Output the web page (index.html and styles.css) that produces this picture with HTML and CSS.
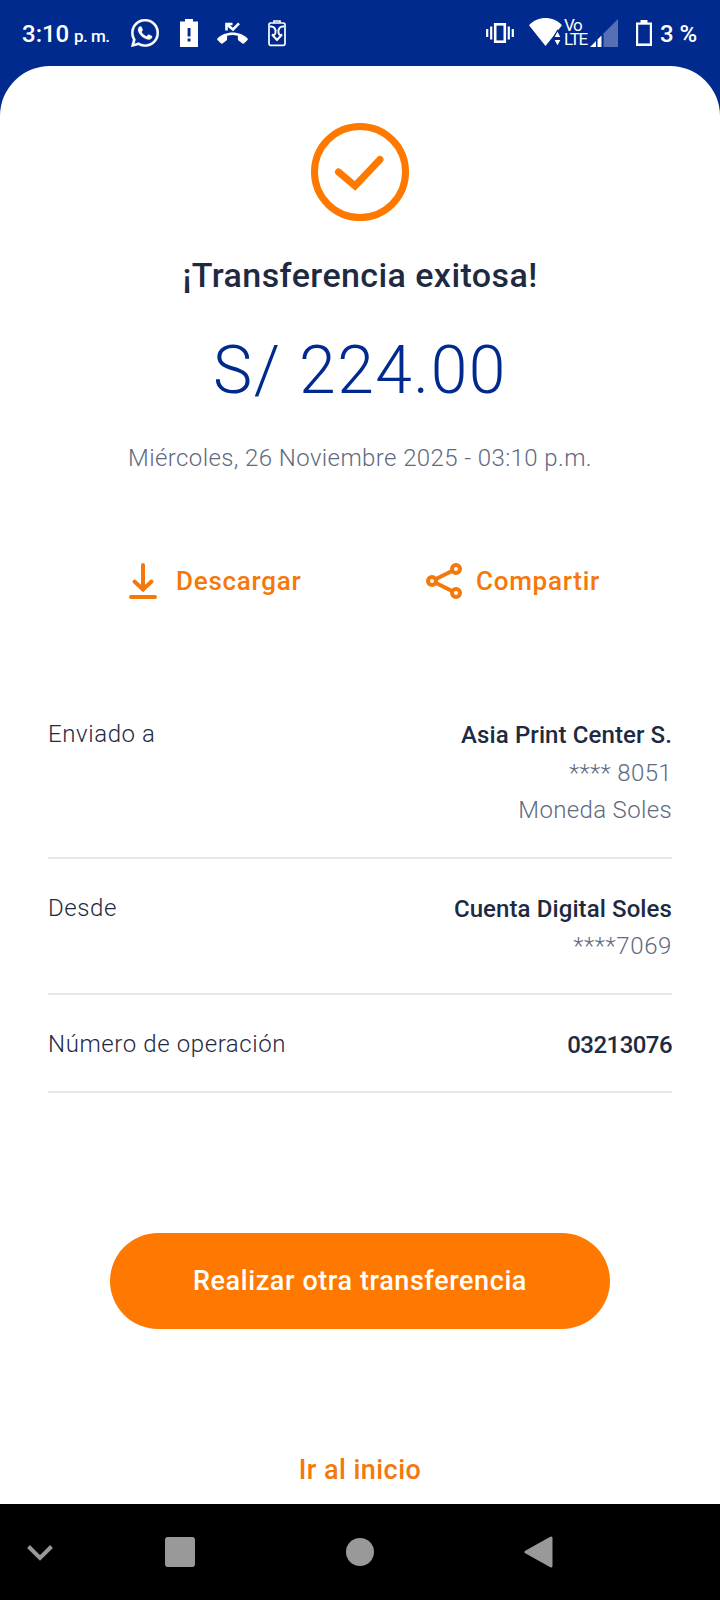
FILE: index.html
```html
<!DOCTYPE html>
<html lang="es">
<head>
<meta charset="utf-8">
<title>Transferencia exitosa</title>
<link rel="stylesheet" href="styles.css">
</head>
<body>
<div class="screen">
  <header class="status">
    <span class="time">3:10</span><span class="ampm">p. m.</span>
    <svg class="i-whatsapp" width="28" height="28" viewBox="2 2 20 20"><path fill="#fff" stroke="#fff" stroke-width=".2" d="M12.04 2C6.58 2 2.13 6.45 2.13 11.91C2.13 13.66 2.59 15.36 3.45 16.86L2.05 22L7.3 20.62C8.75 21.41 10.38 21.83 12.04 21.83C17.5 21.83 21.95 17.38 21.95 11.92C21.95 9.27 20.92 6.78 19.05 4.91C17.18 3.03 14.69 2 12.04 2M12.05 3.67C14.25 3.67 16.31 4.53 17.87 6.09C19.42 7.65 20.28 9.72 20.28 11.92C20.28 16.46 16.58 20.15 12.04 20.15C10.56 20.15 9.11 19.76 7.85 19L7.55 18.83L4.43 19.65L5.26 16.61L5.06 16.29C4.24 15 3.8 13.47 3.8 11.91C3.81 7.37 7.5 3.67 12.05 3.67M8.53 7.33C8.37 7.33 8.1 7.39 7.87 7.64C7.65 7.89 7 8.5 7 9.71C7 10.93 7.89 12.1 8 12.27C8.14 12.44 9.76 14.94 12.25 16C12.84 16.27 13.3 16.42 13.66 16.53C14.25 16.72 14.79 16.69 15.22 16.63C15.7 16.56 16.68 16.03 16.89 15.45C17.1 14.87 17.1 14.38 17.04 14.27C16.97 14.17 16.81 14.11 16.56 14C16.31 13.86 15.09 13.26 14.87 13.18C14.64 13.1 14.5 13.06 14.31 13.3C14.15 13.55 13.67 14.11 13.53 14.27C13.38 14.44 13.24 14.46 13 14.34C12.74 14.21 11.94 13.95 11 13.11C10.26 12.45 9.77 11.64 9.62 11.39C9.5 11.15 9.61 11 9.73 10.89C9.84 10.78 10 10.6 10.1 10.45C10.23 10.31 10.27 10.2 10.35 10.04C10.43 9.87 10.39 9.73 10.33 9.61C10.27 9.5 9.77 8.26 9.56 7.77C9.36 7.29 9.16 7.35 9 7.34H8.53Z"/></svg>
    <svg class="i-alert" width="18" height="28" viewBox="0 0 18 28"><path fill="#fff" fill-rule="evenodd" d="M5 0h8v2.500h5V28H0V2.500h5zM7.600 9h2.900v8.500H7.600zM7.600 19.500h2.900v2.900H7.600z"/></svg>
    <svg class="i-missed" width="31" height="22" viewBox="0 0 31 22"><path d="M9.500 8.500V2h6M10 2.500l6 5L22 1.300" fill="none" stroke="#fff" stroke-width="2.600"/><path fill="#fff" d="M15.500 10.500C9.500 10.500 4 12.800.5 16.400q-.7.800 0 1.600l3.300 3.300q.8.700 1.700.1l4-2.900q.6-.5.600-1.200v-3.600q5.400-1.500 10.800 0v3.600q0 .7.600 1.200l4 2.900q.9.600 1.700-.1l3.300-3.300q.7-.8 0-1.600C27 12.800 21.500 10.500 15.500 10.500z"/></svg>
    <svg class="i-saver" width="18" height="27" viewBox="0 0 18 27" fill="none" stroke="#fff" stroke-width="1.700"><path d="M6 2.800V1h6v1.800"/><rect x="1" y="3" width="16" height="22.300" rx="1.500"/><path stroke-width="1.900" d="M2 6.500C6 6 8 8.500 7.500 12.500Q7 16 4 14.500L9 20l5-5.500Q11 16 10.500 12.500C10 8.500 12 6 16 6.500"/></svg>
    <span class="spacer"></span>
    <svg class="i-vibrate" width="28" height="20" viewBox="0 0 28 20" fill="none" stroke="#fff"><rect x="9.200" y="1.300" width="9.600" height="17.400" stroke-width="2.600"/><path stroke-width="2.200" d="M1.200 6v8M5.200 3.500v13M22.800 3.500v13M26.800 6v8"/></svg>
    <svg class="i-wifi" width="33" height="28" viewBox="0 0 33 28"><path fill="#fff" d="M0 7.200C9-2.400 24-2.400 33 7.200L16.500 28z"/><path fill="#fff" stroke="#002a8d" stroke-width="1.200" d="M28.500 12.500l3.800 7h-7.600zM28.500 28.500l3.800-7h-7.600z"/></svg>
    <span class="volte"><span class="vo">Vo</span><span class="lte">LTE</span></span>
    <svg class="i-signal" width="28" height="28" viewBox="0 0 28 28"><path fill="#5770b5" d="M13.500 14.500L28 0v28H13.500z"/><path fill="#fff" d="M0 28l6-6v6zM7.500 20.500L11.500 16.500V28h-4z"/></svg>
    <svg class="i-batt" width="16" height="26" viewBox="0 0 16 26"><path fill="#fff" d="M4.500 0h7v4h-7z"/><rect x="1.100" y="3.600" width="13.800" height="21.300" fill="none" stroke="#fff" stroke-width="2.200"/><path stroke="#f08080" d="M2 23.500h12"/></svg>
    <span class="pct">3 %</span>
  </header>
  <main class="sheet">
    <svg class="success" width="98" height="98" viewBox="0 0 98 98" fill="none" stroke="#ff7800" stroke-width="7"><circle cx="49" cy="49" r="45.500"/><path stroke-linecap="round" d="M27.500 49L44 63 69 36.500"/></svg>
    <h1 class="title">¡Transferencia exitosa!</h1>
    <div class="amount">S/ 224.00</div>
    <div class="date">Miércoles, 26 Noviembre 2025 - 03:10 p.m.</div>
    <div class="actions">
      <a class="action action-download"><svg width="28" height="36" viewBox="0 0 28 36" fill="none" stroke="#f5780a" stroke-width="4" stroke-linecap="round"><path d="M14 2v24M5.500 18.500L14 26.500 22.500 18.500M2 34h24"/></svg><span class="action-label">Descargar</span></a>
      <a class="action action-share"><svg width="36" height="36" viewBox="0 0 36 36" fill="none" stroke="#f5780a" stroke-width="4"><path d="M10 16L26 8M10 20l16 8"/><circle cx="6" cy="18" r="4"/><circle cx="30" cy="6" r="4"/><circle cx="30" cy="30" r="4"/></svg><span class="action-label">Compartir</span></a>
    </div>
    <section class="details">
      <div class="row"><span class="label">Enviado a</span><div class="value"><strong>Asia Print Center S.</strong><span>**** 8051</span><span>Moneda Soles</span></div></div>
      <div class="row"><span class="label">Desde</span><div class="value"><strong>Cuenta Digital Soles</strong><span class="account">****7069</span></div></div>
      <div class="row"><span class="label">Número de operación</span><div class="value"><strong class="number">03213076</strong></div></div>
    </section>
    <button class="primary">Realizar otra transferencia</button>
    <a class="home">Ir al inicio</a>
  </main>
  <nav class="navbar">
    <svg class="n-down" width="26" height="16" viewBox="0 0 26 16"><path d="M1.500 1.500L13 13 24.500 1.500" fill="none" stroke="#999" stroke-width="4"/></svg>
    <svg class="n-recent" width="30" height="30"><rect width="30" height="30" rx="3" fill="#999"/></svg>
    <svg class="n-home" width="28" height="28"><circle cx="14" cy="14" r="14" fill="#999"/></svg>
    <svg class="n-back" width="29" height="32" viewBox="0 0 29 32"><path d="M2 16L27 2v28z" fill="#999" stroke="#999" stroke-width="3" stroke-linejoin="round"/></svg>
  </nav>
</div>
</body>
</html>
```
FILE: styles.css
```css
* { box-sizing: border-box; }
body { margin: 0; font-family: Roboto, "Liberation Sans", sans-serif; }
.screen { width: 720px; height: 1600px; display: flex; flex-direction: column; background: #002a8d; overflow: hidden; }
.screen svg { flex: none; display: block; }
.status { height: 66px; flex: none; display: flex; align-items: flex-start; padding: 0 22px; color: #fff; font-weight: 500; white-space: nowrap; }
.time { font-size: 24px; line-height: 28px; margin-top: 20px; width: 52px; }
.ampm { font-size: 17px; line-height: 22px; margin-top: 25px; width: 57px; letter-spacing: -0.5px; }
.i-whatsapp { margin-top: 19px; }
.i-alert { margin: 19px 0 0 21px; }
.i-missed { margin: 22px 0 0 19px; }
.i-saver { margin: 20px 0 0 20px; }
.spacer { flex: 1; }
.i-vibrate { margin-top: 23px; }
.i-wifi { margin: 18px 0 0 15px; }
.volte { display: flex; flex-direction: column; width: 26px; margin: 18px 0 0 2px; font-size: 17px; line-height: 14px; font-weight: 400; }
.vo { letter-spacing: -1.5px; }
.lte { letter-spacing: -1.2px; }
.i-signal { margin-top: 19px; }
.i-batt { margin: 20px 0 0 18px; }
.pct { font-size: 24px; line-height: 28px; margin: 20px 0 0 8px; width: 38px; }
.sheet { flex: 1; background: #fff; border-radius: 50px 50px 0 0; display: flex; flex-direction: column; align-items: center; white-space: nowrap; }
.success { margin-top: 57px; }
.title { margin: 34px 0 0; height: 40px; line-height: 40px; font-size: 34px; font-weight: 500; letter-spacing: 0.42px; color: #1e2a42; }
.amount { margin-top: 38px; height: 76px; line-height: 76px; font-size: 66px; font-weight: 300; letter-spacing: 1.5px; color: #002a8d; }
.date { margin-top: 34px; height: 30px; line-height: 30px; font-size: 24px; font-weight: 300; letter-spacing: 0.4px; color: #606a80; }
.actions { margin-top: 90px; height: 36px; width: 100%; display: flex; padding-left: 129px; }
.action { display: flex; align-items: center; color: #f5780a; font-size: 26px; font-weight: 500; line-height: 36px; letter-spacing: 0.75px; }
.action-download { width: 297px; gap: 19px; }
.action-share { gap: 14px; }
.details { margin-top: 86px; width: 624px; }
.row { display: flex; justify-content: space-between; padding: 32px 0 27px; border-bottom: 2px solid #e6e7e7; font-size: 24px; line-height: 37.5px; font-weight: 300; color: #1e2a42; }
.label { margin-top: -1px; letter-spacing: 0.6px; }
.value { display: flex; flex-direction: column; align-items: flex-end; color: #606a80; letter-spacing: 0.35px; }
.value strong { font-weight: 500; color: #1e2a42; letter-spacing: 0.1px; }
.value .account { letter-spacing: 0.6px; }
.value .number { letter-spacing: -0.55px; }
.primary { margin-top: 140px; width: 500px; height: 96px; flex: none; border: 0; border-radius: 48px; background: #ff7800; color: #fff; font: 500 27px/96px Roboto, "Liberation Sans", sans-serif; letter-spacing: 0.58px; padding: 0; }
.home { margin-top: 121px; font-size: 27px; line-height: 40px; font-weight: 500; letter-spacing: 0.45px; color: #f5780a; }
.navbar { height: 96px; flex: none; background: #000; display: flex; align-items: center; padding-left: 27px; }
.n-down { margin-top: 1px; }
.n-recent { margin-left: 112px; }
.n-home { margin-left: 151px; }
.n-back { margin-left: 150px; }
```
